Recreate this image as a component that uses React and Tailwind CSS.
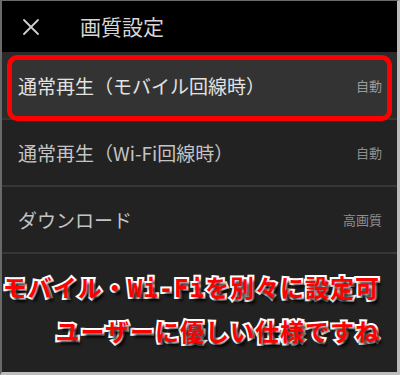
import React from 'react'

const ROWS = [
  { label: '通常再生（Wi-Fi回線時）', value: '自動' },
  { label: 'ダウンロード', value: '高画質' }
]

// white outline painted under the red fill, plus a soft dark drop shadow
const outline = {
  WebkitTextStroke: '4px #ffffff',
  paintOrder: 'stroke fill',
  textShadow: '3px 4px 3px rgba(0,0,0,0.9)'
}

const captionFont = "[font-family:'DejaVu_Sans_Mono','Noto_Sans_CJK_JP',monospace]"
const captionFx = 'text-[#ff0000] font-bold text-[24px] leading-none tracking-[1px] whitespace-nowrap'

function CloseIcon() {
  return (
    <svg width="18" height="18" viewBox="0 0 18 18" className="text-[#cfcfcf]">
      <path d="M2 2 L16 16 M16 2 L2 16" stroke="currentColor" strokeWidth="1.8" strokeLinecap="round" />
    </svg>
  )
}

export default function App() {
  return (
    <div className="w-[400px] h-[375px] overflow-hidden border-t border-l-2 border-r-[3px] border-b-[3px] border-t-[#6a6a6a] border-l-[#6a6a6a] border-r-[#bdbdbd] border-b-[#bdbdbd] bg-[#222] flex flex-col [font-family:'Noto_Sans_CJK_JP','Noto_Sans',sans-serif]">
      <header className="h-[51px] shrink-0 bg-black flex items-center pl-[20px] gap-[40px]">
        <CloseIcon />
        <span className="text-[21px] text-[#d6d6d6] leading-none">画質設定</span>
      </header>

      <div className="relative h-[68px] shrink-0 bg-[#2a2a2a] border-b-2 border-[#363636]">
        <div className="absolute left-[5px] right-[5px] top-[3px] -bottom-[3px] rounded-[10px] border-[5px] border-[#ff0000] bg-[#333]" />
        <div className="relative h-full flex items-center justify-between pl-[16px] pr-[15px]">
          <span className="text-[19px] text-[#e2e2e2] leading-none">通常再生（モバイル回線時）</span>
          <span className="text-[13px] text-[#9a9a9a] leading-none">自動</span>
        </div>
      </div>

      {ROWS.map((r) => (
        <div key={r.label} className="h-[67px] shrink-0 flex items-center justify-between pl-[16px] pr-[15px] border-b-2 border-[#363636]">
          <span className="text-[19px] text-[#c4c4c4] leading-none">{r.label}</span>
          <span className="text-[13px] text-[#8e8e8e] leading-none">{r.value}</span>
        </div>
      ))}

      <div className={`flex-1 flex flex-col items-end pr-[17px] pt-[23px] gap-[20px] ${captionFont}`}>
        <p className={captionFx} style={outline}>モバイル・Wi-Fiを別々に設定可</p>
        <p className={captionFx} style={outline}>ユーザーに優しい仕様ですね</p>
      </div>
    </div>
  )
}
